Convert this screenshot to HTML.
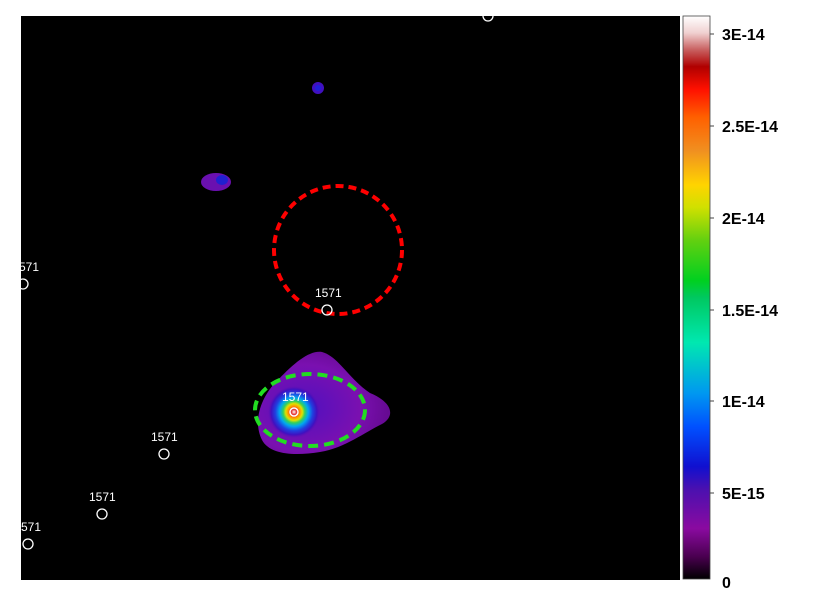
<!DOCTYPE html>
<html><head><style>
body{margin:0;background:#fff;width:830px;height:596px;overflow:hidden;font-family:"Liberation Sans",sans-serif}
</style></head><body>
<svg width="830" height="596" xmlns="http://www.w3.org/2000/svg">
<defs>
<clipPath id="pc"><rect x="21" y="16" width="659" height="564"/></clipPath>
<linearGradient id="cb" x1="0" y1="1" x2="0" y2="0">
<stop offset="0" stop-color="#000"/>
<stop offset="0.04" stop-color="#4a0050"/>
<stop offset="0.09" stop-color="#8a0aa0"/>
<stop offset="0.16" stop-color="#4a10b0"/>
<stop offset="0.2" stop-color="#1010d0"/>
<stop offset="0.27" stop-color="#0050ff"/>
<stop offset="0.33" stop-color="#0098f0"/>
<stop offset="0.42" stop-color="#00e8b0"/>
<stop offset="0.5" stop-color="#00c860"/>
<stop offset="0.53" stop-color="#00d020"/>
<stop offset="0.6" stop-color="#60d010"/>
<stop offset="0.66" stop-color="#d0e000"/>
<stop offset="0.7" stop-color="#ffd400"/>
<stop offset="0.76" stop-color="#f09020"/>
<stop offset="0.82" stop-color="#ff6000"/>
<stop offset="0.87" stop-color="#ff1000"/>
<stop offset="0.91" stop-color="#b00000"/>
<stop offset="0.94" stop-color="#c86060"/>
<stop offset="0.97" stop-color="#f0d0d0"/>
<stop offset="1" stop-color="#fff"/>
</linearGradient>
<radialGradient id="src" cx="0.5" cy="0.5" r="0.5">
<stop offset="0" stop-color="#fff"/>
<stop offset="0.12" stop-color="#e01010"/>
<stop offset="0.22" stop-color="#ff9000"/>
<stop offset="0.32" stop-color="#e0e000"/>
<stop offset="0.42" stop-color="#30d060"/>
<stop offset="0.55" stop-color="#00a8f0"/>
<stop offset="0.72" stop-color="#2040e0"/>
<stop offset="0.88" stop-color="#4010c0"/>
<stop offset="1" stop-color="#6010b0" stop-opacity="0"/>
</radialGradient>
<radialGradient id="blob" cx="0.35" cy="0.55" r="0.7">
<stop offset="0" stop-color="#5010c0"/>
<stop offset="0.6" stop-color="#7a10b0"/>
<stop offset="1" stop-color="#60088a"/>
</radialGradient>
</defs>
<rect x="21" y="16" width="659" height="564" fill="#000"/>
<g clip-path="url(#pc)">
<path d="M262,440 C252,420 262,395 278,380 C295,362 310,350 322,352 C338,356 350,380 370,393 C392,402 396,416 382,424 C365,432 345,448 320,452 C295,456 270,455 262,440 Z" fill="url(#blob)"/>
<circle cx="294" cy="412" r="26" fill="url(#src)"/>
<circle cx="294" cy="412" r="4" fill="none" stroke="#fff" stroke-width="1.5"/>
<ellipse cx="216" cy="182" rx="15" ry="9" fill="#6a10b0"/>
<ellipse cx="222" cy="180" rx="6" ry="5" fill="#2020d0"/>
<ellipse cx="318" cy="88" rx="6" ry="6" fill="#4010c0"/>
<ellipse cx="318" cy="88" rx="3" ry="3" fill="#2020d8"/>
<circle cx="338" cy="250" r="64" fill="none" stroke="#f00" stroke-width="4" stroke-dasharray="8,5"/>
<ellipse cx="310" cy="410" rx="55" ry="36" fill="none" stroke="#22dd22" stroke-width="4" stroke-dasharray="10,6"/>
<g fill="none" stroke="#fff" stroke-width="1.3">
<circle cx="488" cy="16" r="5"/><circle cx="23" cy="284" r="5"/><circle cx="327" cy="310" r="5"/>
<circle cx="164" cy="454" r="5"/><circle cx="102" cy="514" r="5"/><circle cx="28" cy="544" r="5"/>
</g>
<g fill="#fff" font-size="12">
<text x="19" y="271">571</text><text x="315" y="297">1571</text><text x="282" y="401">1571</text>
<text x="151" y="441">1571</text><text x="89" y="501">1571</text><text x="21" y="531">571</text>
</g>
</g>
<rect x="683" y="16" width="27" height="563" fill="url(#cb)" stroke="#444" stroke-width="0.8"/>
<g stroke="#444" stroke-width="1">
<line x1="710" y1="34" x2="714" y2="34"/><line x1="710" y1="126" x2="714" y2="126"/><line x1="710" y1="218" x2="714" y2="218"/>
<line x1="710" y1="310" x2="714" y2="310"/><line x1="710" y1="401" x2="714" y2="401"/><line x1="710" y1="493" x2="714" y2="493"/>
</g>
<g fill="#000" font-size="16" font-weight="bold">
<text x="722" y="40">3E-14</text><text x="722" y="132">2.5E-14</text><text x="722" y="224">2E-14</text>
<text x="722" y="316">1.5E-14</text><text x="722" y="407">1E-14</text><text x="722" y="499">5E-15</text>
<text x="722" y="588">0</text>
</g>
</svg>
</body></html>
